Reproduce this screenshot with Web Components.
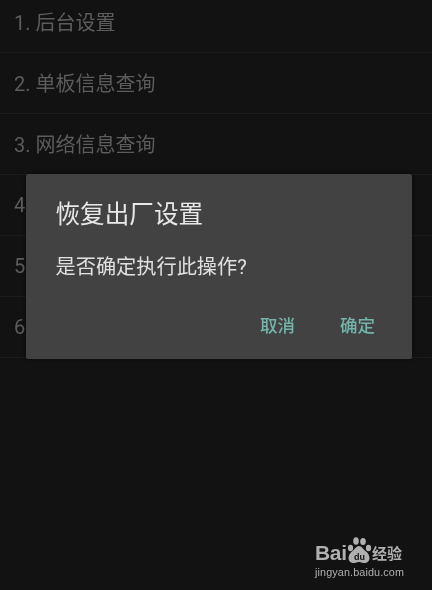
<!DOCTYPE html>
<html lang="zh"><head><meta charset="utf-8">
<style>
html,body{margin:0;padding:0;background:#121212;height:590px;overflow:hidden}
body{position:relative;font-family:"Roboto","Noto Sans CJK SC",sans-serif;width:432px}
</style></head><body>
<menu-list>
<menu-row>1. 后台设置</menu-row>
<menu-row>2. 单板信息查询</menu-row>
<menu-row>3. 网络信息查询</menu-row>
<menu-row>4.</menu-row>
<menu-row>5.</menu-row>
<menu-row>6.</menu-row>
</menu-list>
<alert-dialog>
<span slot="title">恢复出厂设置</span>
<span slot="message">是否确定执行此操作?</span>
<dialog-button slot="actions">取消</dialog-button>
<dialog-button slot="actions">确定</dialog-button>
</alert-dialog>
<baidu-mark></baidu-mark>
<script>
function def(name,html){customElements.define(name,class extends HTMLElement{constructor(){super();this.attachShadow({mode:"open"}).innerHTML=html}})}
def("menu-list",`<style>:host{display:flex;flex-direction:column;margin-top:-8px}</style><slot></slot>`);
def("menu-row",`<style>:host{display:flex;align-items:center;box-sizing:border-box;height:61px;padding:0 0 1px 14px;border-bottom:1px solid #1b1b1b;color:#5c5c5c;font-size:20px;filter:blur(.3px)}</style><slot></slot>`);
def("alert-dialog",`<style>
:host{position:absolute;left:26px;top:174px;width:386px;height:185px;box-sizing:border-box;display:flex;flex-direction:column;background:#424242;border-radius:2px;padding:25px 37px 0 30px;box-shadow:0 0 4px rgba(0,0,0,.5)}
.t{color:#e8e8e8;font-size:24.6px;line-height:32px;margin-left:-.5px;filter:blur(.3px)}
.m{color:#e0e0e0;font-size:20.2px;line-height:28px;margin-top:22px;margin-left:-.5px;filter:blur(.3px)}
.a{display:flex;justify-content:flex-end;gap:45px;margin-top:33px;filter:blur(.3px)}
</style><div class="t"><slot name="title"></slot></div><div class="m"><slot name="message"></slot></div><div class="a"><slot name="actions"></slot></div>`);
def("dialog-button",`<style>:host{display:block;color:#74b5ab;font-size:17.5px;line-height:24px;font-weight:500}</style><slot></slot>`);
def("baidu-mark",`<style>
:host{position:absolute;left:315px;top:536px;width:95px;height:45px;color:#b0b0b0;font-family:"Liberation Sans",sans-serif;filter:blur(.35px)}
.top{display:flex;align-items:flex-end;height:28px}
.bai{font-size:21px;font-weight:700;line-height:23px;letter-spacing:-.3px;width:31px}
svg{width:26px;height:28px;flex:none}
.jy{font:600 15px/20px "Noto Sans CJK SC",sans-serif;margin-bottom:1px}
.url{font-size:10.8px;line-height:14px;margin-top:1px;letter-spacing:.12px;white-space:nowrap}
.du{font:700 9px "Liberation Sans",sans-serif;fill:#121212}
</style><div class="top"><span class="bai">Bai</span><svg viewBox="0 0 26 28"><g fill="currentColor"><ellipse cx="4.500" cy="12" rx="2.600" ry="3.300"/><ellipse cx="10" cy="5" rx="2.800" ry="3.800"/><ellipse cx="17" cy="5.500" rx="2.800" ry="3.600"/><ellipse cx="22.500" cy="12" rx="2.600" ry="3.300"/><path d="M13 10C10.500 10 9 13 6.500 15 4 17 2.500 19.500 2.500 22 2.500 25.500 5.500 27.500 8.500 27 10 26.700 11.500 26 13 26S16 26.700 17.500 27C20.500 27.500 23.500 25.500 23.500 22 23.500 19.500 22 17 19.500 15 17 13 15.500 10 13 10Z"/></g><text class="du" x="8" y="24">du</text></svg><span class="jy">经验</span></div><div class="url">jingyan.baidu.com</div>`);
</script>
</body></html>
